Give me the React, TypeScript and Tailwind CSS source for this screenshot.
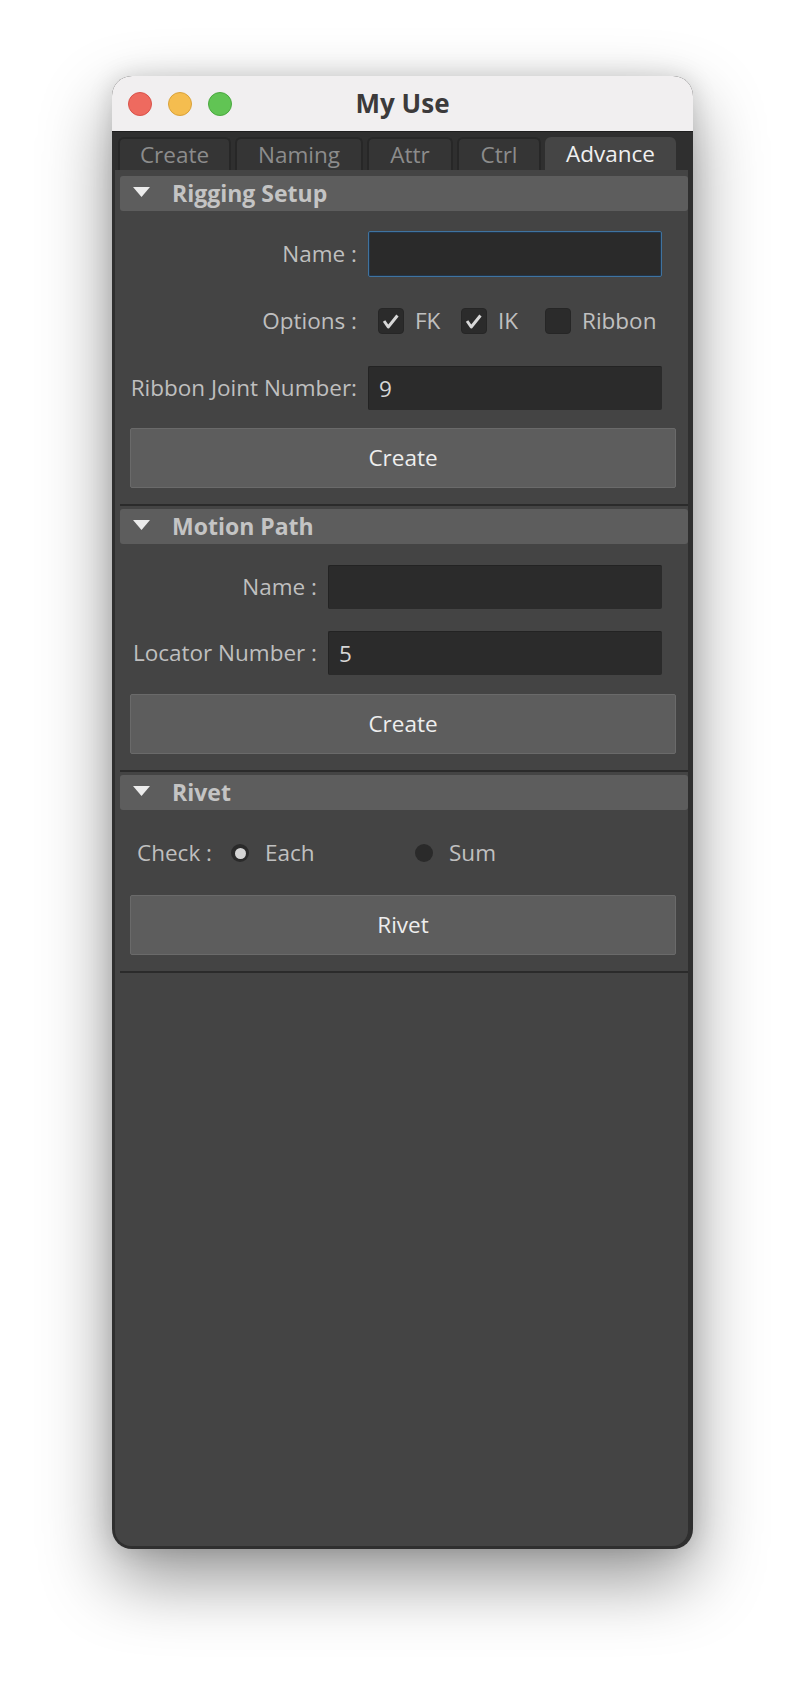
import React from 'react';

const tabs = [
  { label: 'Create', width: 'w-[113px]', active: false },
  { label: 'Naming', width: 'w-[128px]', active: false },
  { label: 'Attr', width: 'w-[86px]', active: false },
  { label: 'Ctrl', width: 'w-[84px]', active: false },
  { label: 'Advance', width: 'w-[131px]', active: true },
];

function SectionHeader({ title }: { title: string }) {
  return (
    <div className="ml-[5px] flex h-[35px] items-center rounded-[3px] bg-[#5d5d5d]">
      <svg className="ml-[13px] -mt-[4px] h-[10px] w-[17px]" viewBox="0 0 17 10">
        <path d="M0 0H17L8.5 10Z" fill="#ececec" />
      </svg>
      <span className="ml-[22px] text-[23px] font-bold leading-none text-[#c4c4c4]">{title}</span>
    </div>
  );
}

function Separator() {
  return <div className="ml-[5px] mt-[16px] h-[2px] bg-[#2b2b2b]" />;
}

function TextField({ value, focused }: { value?: string; focused?: boolean }) {
  return (
    <div
      className={
        focused
          ? 'flex h-[46px] items-center rounded-[2px] border border-[#3f73a0] bg-[#2a2a2a] pl-[9px] shadow-[inset_0_0_0_1px_#223447]'
          : 'flex h-[44px] items-center rounded-[2px] border-t border-l border-[#232323] bg-[#2b2b2b] pl-[10px]'
      }
    >
      <span className="text-[22.5px] font-medium text-[#d6d6d6]">{value}</span>
    </div>
  );
}

function Checkbox({ label, checked }: { label: string; checked: boolean }) {
  return (
    <div className="flex items-center gap-[11px]">
      <div className="flex h-[26px] w-[26px] items-center justify-center rounded-[4px] border border-[#262626] bg-[#2b2b2b]">
        {checked && (
          <svg viewBox="0 0 26 26" className="h-[26px] w-[26px]">
            <path d="M5.5 13L10 19.5L20 7" fill="none" stroke="#d8d8d8" strokeWidth="3.2" strokeLinejoin="round" />
          </svg>
        )}
      </div>
      <span className="text-[22.5px] font-medium text-[#c0c0c0]">{label}</span>
    </div>
  );
}

function Radio({ label, selected }: { label: string; selected: boolean }) {
  return (
    <div className="flex items-center gap-[16px]">
      <div className="flex h-[18px] w-[18px] items-center justify-center rounded-full bg-[#2a2a2a]">
        {selected && <div className="h-[11px] w-[11px] rounded-full bg-[#d4d4d4]" />}
      </div>
      <span className="text-[22.5px] font-medium text-[#c0c0c0]">{label}</span>
    </div>
  );
}

function MayaButton({ label }: { label: string }) {
  return (
    <div className="flex h-[60px] items-center justify-center rounded-[2px] border border-[#6a6a6a] bg-[#5d5d5d]">
      <span className="text-[22.5px] font-medium text-[#eeeeee]">{label}</span>
    </div>
  );
}

export default function App() {
  return (
    <div className="h-[1700px] w-[806px] overflow-hidden bg-white pt-[76px] pl-[112px] font-['Open_Sans','Liberation_Sans',sans-serif]">
      <div className="flex h-[1473px] w-[581px] flex-col overflow-hidden rounded-[20px] bg-[#2f2f2f] shadow-[0_30px_70px_rgba(0,0,0,0.42),0_0_24px_rgba(0,0,0,0.14)]">
        {/* title bar */}
        <div className="relative flex h-[56px] flex-none items-center border-b border-[#1e1e1e] bg-[#f1eff0] pl-[16px]">
          <div className="flex gap-[16px]">
            <div className="h-[24px] w-[24px] rounded-full border border-[#d9524a] bg-[#ee6a5f]" />
            <div className="h-[24px] w-[24px] rounded-full border border-[#d9a23a] bg-[#f5bd4f]" />
            <div className="h-[24px] w-[24px] rounded-full border border-[#4aa83f] bg-[#61c454]" />
          </div>
          <span className="absolute left-0 right-0 text-center text-[26px] font-bold text-[#3c3a3b]">My Use</span>
        </div>

        {/* tabs */}
        <div className="flex h-[38px] flex-none items-end gap-[4px] pl-[6px]">
          {tabs.map((t) => (
            <div
              key={t.label}
              className={
                t.active
                  ? `${t.width} flex h-[33px] items-center justify-center rounded-t-[6px] bg-[#454545] text-[22.5px] font-medium text-[#f0f0f0]`
                  : `${t.width} flex h-[33px] items-center justify-center rounded-t-[6px] border-2 border-b-0 border-[#272727] bg-[#353535] text-[22.5px] font-medium text-[#8c8c8c]`
              }
            >
              {t.label}
            </div>
          ))}
        </div>

        {/* content */}
        <div className="mx-[3px] mr-[5px] mb-[3px] flex-1 rounded-b-[16px] bg-[#444444] pt-[6px]">
          <SectionHeader title="Rigging Setup" />
          <div className="pt-[20px] pl-[15px] pr-[12px]">
            <div className="grid grid-cols-[227px_294px] items-center gap-x-[11px] gap-y-[21px]">
              <span className="text-right text-[22.5px] font-medium whitespace-nowrap text-[#bfbfbf]">Name :</span>
              <TextField focused />
              <span className="flex h-[46px] items-center justify-end text-[22.5px] font-medium whitespace-nowrap text-[#bfbfbf]">Options :</span>
              <div className="flex items-center pl-[10px]">
                <div className="w-[83px]">
                  <Checkbox label="FK" checked />
                </div>
                <div className="w-[84px]">
                  <Checkbox label="IK" checked />
                </div>
                <Checkbox label="Ribbon" checked={false} />
              </div>
              <span className="flex h-[46px] items-center justify-end text-[22.5px] font-medium whitespace-nowrap text-[#bfbfbf]">Ribbon Joint Number:</span>
              <TextField value="9" />
            </div>
            <div className="mt-[17px]">
              <MayaButton label="Create" />
            </div>
          </div>
          <Separator />

          <div className="mt-[3px]">
            <SectionHeader title="Motion Path" />
          </div>
          <div className="pt-[20px] pl-[15px] pr-[12px]">
            <div className="grid grid-cols-[187px_334px] items-center gap-x-[11px] gap-y-[20px]">
              <span className="flex h-[46px] items-center justify-end text-[22.5px] font-medium whitespace-nowrap text-[#bfbfbf]">Name :</span>
              <TextField />
              <span className="flex h-[46px] items-center justify-end text-[22.5px] font-medium whitespace-nowrap text-[#bfbfbf]">Locator Number :</span>
              <TextField value="5" />
            </div>
            <div className="mt-[18px]">
              <MayaButton label="Create" />
            </div>
          </div>
          <Separator />

          <div className="mt-[3px]">
            <SectionHeader title="Rivet" />
          </div>
          <div className="pt-[21px] pl-[15px] pr-[12px]">
            <div className="flex h-[44px] items-center pl-[7px]">
              <span className="w-[94px] text-[22.5px] font-medium whitespace-nowrap text-[#bfbfbf]">Check :</span>
              <div className="w-[184px]">
                <Radio label="Each" selected />
              </div>
              <Radio label="Sum" selected={false} />
            </div>
            <div className="mt-[20px]">
              <MayaButton label="Rivet" />
            </div>
          </div>
          <Separator />
        </div>
      </div>
    </div>
  );
}
